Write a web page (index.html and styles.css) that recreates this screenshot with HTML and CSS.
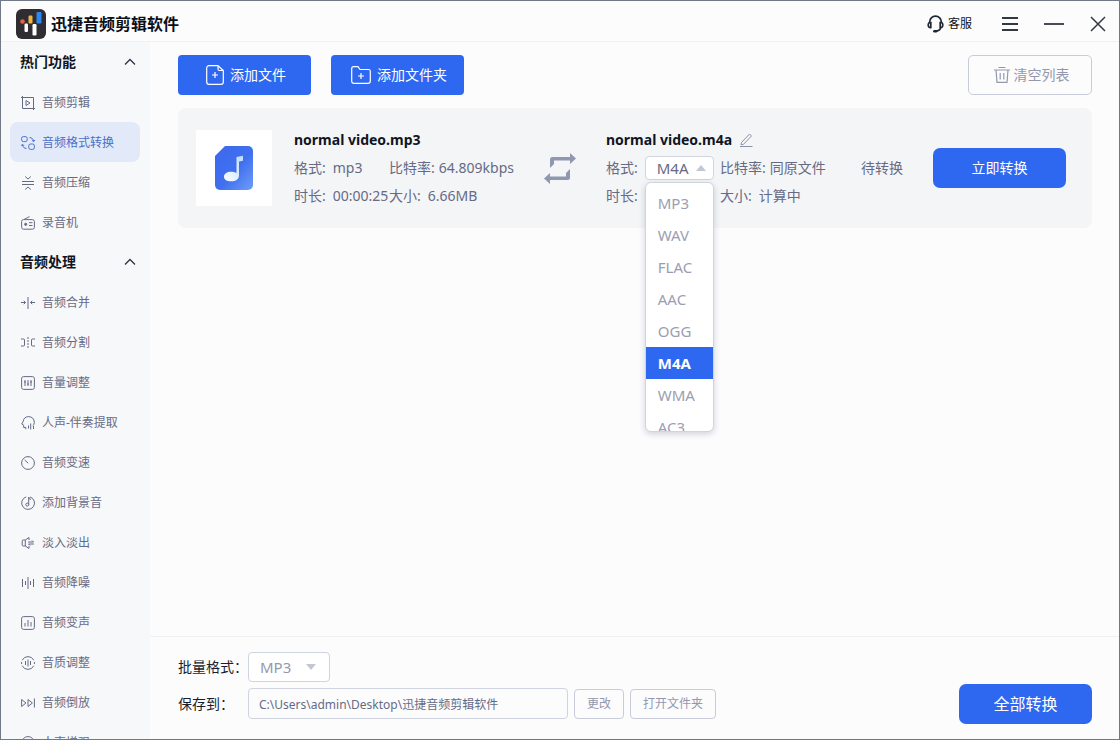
FILE: index.html
```html
<!DOCTYPE html>
<html lang="zh-CN">
<head>
<meta charset="utf-8">
<meta name="viewport" content="width=device-width, initial-scale=1">
<title>迅捷音频剪辑软件</title>
<link rel="stylesheet" href="styles.css">
</head>
<body>
<div class="app">
  <header class="titlebar">
    <svg class="logo" viewBox="0 0 30 30" aria-hidden="true">
      <rect width="30" height="30" rx="6" fill="#2f2d31"/>
      <circle cx="6.500" cy="12.500" r="2.300" fill="#e8613c"/>
      <rect x="8.500" y="14.500" width="3.500" height="8.500" rx="1.200" fill="#fff"/>
      <rect x="12.500" y="6.500" width="4" height="8" rx="1.200" fill="#f0b445"/>
      <rect x="16.500" y="15" width="4" height="11.500" rx="1.200" fill="#fff"/>
      <rect x="20.500" y="3" width="5" height="11.500" rx="1.200" fill="#2f86ee"/>
    </svg>
    <h1 class="app-name">迅捷音频剪辑软件</h1>
    <div class="window-tools">
      <button class="tool support" type="button">
        <svg width="17" height="18" viewBox="0 0 17 18" fill="none" stroke="#1d2433" stroke-width="1.700" stroke-linecap="round" aria-hidden="true">
          <path d="M2.600 7.500V7a5.900 5.900 0 0 1 11.800 0v.5M3.800 7.500c-1.400-.3-2.600.7-2.600 2.500s1.200 2.900 2.600 2.600zM13.200 7.500c1.400-.3 2.600.7 2.600 2.500s-1.200 2.900-2.600 2.600zM13.800 12.800c-.6 2-2.300 3.200-4.600 3.400"/>
          <path d="M7.400 16.300h1.600" stroke-width="2.600"/>
        </svg>
        客服
      </button>
      <button class="tool" type="button" aria-label="菜单">
        <svg width="16" height="16" viewBox="0 0 16 16" stroke="#333844" stroke-width="1.800" aria-hidden="true"><path d="M0 2h16M0 8h16M0 14h16"/></svg>
      </button>
      <button class="tool" type="button" aria-label="最小化">
        <svg width="20" height="16" viewBox="0 0 20 16" stroke="#333844" stroke-width="1.800" aria-hidden="true"><path d="M0 8h20"/></svg>
      </button>
      <button class="tool" type="button" aria-label="关闭">
        <svg width="16" height="16" viewBox="0 0 16 16" stroke="#333844" stroke-width="1.500" aria-hidden="true"><path d="M1 1l14 14M15 1L1 15"/></svg>
      </button>
    </div>
  </header>

  <nav class="sidebar" aria-label="功能">
    <button class="group" type="button" aria-expanded="true">热门功能
      <svg width="12" height="8" viewBox="0 0 12 8" aria-hidden="true"><path d="M1 6.500L6 1.500l5 5"/></svg>
    </button>
    <a class="item" href="#"><svg viewBox="0 0 14 14" aria-hidden="true"><path d="M0 1.500h12.500V14M1.500 0v12.500H14M5 4.500v5L9 7z"/></svg>音频剪辑</a>
    <a class="item active" href="#" aria-current="page"><svg viewBox="0 0 14 14" aria-hidden="true"><rect x=".6" y=".6" width="5.600" height="5" rx="1.800"/><rect x="7.800" y="8" width="5.600" height="5.400" rx="1.800"/><path d="M8.500 1.600c2.300 0 3.800 1.200 4 3.700M10.800 4l1.700 1.700L14 4M.2 9.800l1.300-1.600L3 9.800M1.500 8.600c.2 2.500 1.700 3.800 4 3.800"/></svg>音频格式转换</a>
    <a class="item" href="#"><svg viewBox="0 0 14 14" aria-hidden="true"><path d="M1 5.500h12M1 8.500h12M4.200 .5L7 3l2.800-2.500M4.200 13.500L7 11l2.800 2.500"/></svg>音频压缩</a>
    <a class="item" href="#"><svg viewBox="0 0 14 14" aria-hidden="true"><rect x=".6" y="3.600" width="12.800" height="9.600" rx="2"/><path d="M3 3.500L8.500 .6M8 6.700h3.500M8 9.500h3.500"/><circle cx="4.700" cy="8.300" r="1.100" fill="currentColor"/></svg>录音机</a>
    <button class="group" type="button" aria-expanded="true">音频处理
      <svg width="12" height="8" viewBox="0 0 12 8" aria-hidden="true"><path d="M1 6.500L6 1.500l5 5"/></svg>
    </button>
    <a class="item" href="#"><svg viewBox="0 0 14 14" aria-hidden="true"><path d="M7 1v12M0 6.500h4.500M2.800 4.800l1.700 1.700-1.700 1.700M14 6.500H9.500M11.200 4.800L9.500 6.500l1.700 1.700"/></svg>音频合并</a>
    <a class="item" href="#"><svg viewBox="0 0 14 14" aria-hidden="true"><path d="M0 3h2.500Q3.500 3 3.500 4v5q0 1-1 1H0M14 3h-2.500Q10.500 3 10.500 4v5q0 1 1 1H14"/><path d="M7 1v12" stroke-dasharray="2 1"/></svg>音频分割</a>
    <a class="item" href="#"><svg viewBox="0 0 14 14" aria-hidden="true"><rect x=".6" y=".6" width="12.800" height="12.800" rx="2"/><path d="M4 4v6M7 4v6M10 4v6M3 6h2M6 8h2M9 6h2"/></svg>音量调整</a>
    <a class="item" href="#"><svg viewBox="0 0 14 14" aria-hidden="true"><path d="M4.800 13.200V11.500H2.700V9.200L.7 8l1.400-2.300C2.300 2.500 4.600.6 7.600.6c3.300 0 5.700 2.300 5.700 5.600 0 1.500-.5 2.600-1.300 3.500M7.500 9.500v3M9.700 7.500v6M12.500 10v3"/></svg>人声-伴奏提取</a>
    <a class="item" href="#"><svg viewBox="0 0 14 14" aria-hidden="true"><circle cx="7" cy="7" r="6.400"/><path d="M3.700 4l3.500 3.200"/></svg>音频变速</a>
    <a class="item" href="#"><svg viewBox="0 0 14 14" aria-hidden="true"><path d="M5.200.9A6.400 6.400 0 1 0 9 .9M7.700 8.500V1q.2 2.200 2.300 2.500"/><circle cx="6.300" cy="8.600" r="1.500"/></svg>添加背景音</a>
    <a class="item" href="#"><svg viewBox="0 0 14 14" aria-hidden="true"><path d="M8 4V1.500L4.300 4H2.200Q1.200 4 1.200 5v4q0 1 1 1h2.100L8 12.500V10M4.300 4v6M7 6h5.500L11 4.500M13 8H7.500L9 9.500"/></svg>淡入淡出</a>
    <a class="item" href="#"><svg viewBox="0 0 14 14" aria-hidden="true"><path d="M1.500 3v8M4.500 5v4M7 1v12M9.500 5v4M12.500 3v8"/></svg>音频降噪</a>
    <a class="item" href="#"><svg viewBox="0 0 14 14" aria-hidden="true"><rect x=".6" y=".6" width="12.800" height="12.800" rx="2"/><path d="M4 7v3.500M7 4v6.500M10 6v4.500"/></svg>音频变声</a>
    <a class="item" href="#"><svg viewBox="0 0 14 14" aria-hidden="true"><path d="M1.200 4.300a6.400 6.400 0 0 1 11.600 0M1.200 9.700a6.400 6.400 0 0 0 11.600 0M.6 6v2M13.400 6v2M4.500 5v4M7 3.500v7M9.500 5v4"/></svg>音质调整</a>
    <a class="item" href="#"><svg viewBox="0 0 14 14" aria-hidden="true"><path d="M.6 3.500v7L5 7zM7 3.500v7L11.400 7zM13.400 2.500v9"/></svg>音频倒放</a>
    <a class="item" href="#"><svg viewBox="0 0 14 14" aria-hidden="true"><circle cx="7" cy="7" r="6.400"/></svg>人声增强</a>
  </nav>

  <main class="content">
    <div class="toolbar">
      <button class="btn primary" type="button">
        <svg width="18" height="20" viewBox="0 0 18 20" aria-hidden="true"><path d="M12 .7H3A2.300 2.300 0 0 0 .7 3v14A2.300 2.300 0 0 0 3 19.300h12a2.300 2.300 0 0 0 2.300-2.300V5.500zM12 .7V4q0 1.500 1.500 1.500h3.800M9 7v6M6 10h6"/></svg>
        添加文件
      </button>
      <button class="btn primary" type="button">
        <svg width="20" height="18" viewBox="0 0 20 18" aria-hidden="true"><path d="M.7 15V2.500Q.7.700 2.500.7H7l2 2.800h8.500q1.800 0 1.800 1.800V15q0 2.300-2.300 2.300H3Q.7 17.300.7 15zM10 7v6M7 10h6"/></svg>
        添加文件夹
      </button>
      <button class="btn outline clear" type="button">
        <svg width="16" height="18" viewBox="0 0 16 18" aria-hidden="true"><path d="M4.500 1.500h7M0 4h16M2 4l1 12.300h10L14 4M6.200 7v6.500M9.800 7v6.500"/></svg>
        清空列表
      </button>
    </div>

    <article class="task">
      <div class="thumb">
        <svg width="38" height="44" viewBox="0 0 38 44" aria-hidden="true">
          <defs>
            <linearGradient id="fileFill" x1="0" y1="0" x2="1" y2="1"><stop offset="0" stop-color="#3c68ee"/><stop offset=".55" stop-color="#4070ef"/><stop offset="1" stop-color="#6f9df8"/></linearGradient>
            <linearGradient id="noteFill" x1="1" y1="0" x2="0" y2="1"><stop offset="0" stop-color="#b9ddff"/><stop offset="1" stop-color="#fff"/></linearGradient>
          </defs>
          <path d="M10 0h23a5 5 0 0 1 5 5v34a5 5 0 0 1-5 5H5a5 5 0 0 1-5-5V10z" fill="url(#fileFill)"/>
          <path d="M21.500 11l6.500-1.200v5l-4 .7V29.500c0 3.500-3 5.800-8 5.800-4 0-7-1.600-7-4.600s3-5 7-5c2 0 4 .5 5.500 1.200z" fill="url(#noteFill)"/>
        </svg>
      </div>
      <div class="info">
        <h2 class="file-name">normal video.mp3</h2>
        <dl class="meta source">
          <div class="field"><dt>格式:</dt><dd>mp3</dd></div>
          <div class="field tight"><dt>比特率:</dt><dd>64.809kbps</dd></div>
          <div class="field"><dt>时长:</dt><dd>00:00:25</dd></div>
          <div class="field"><dt>大小:</dt><dd>6.66MB</dd></div>
        </dl>
      </div>
      <svg class="swap" width="32" height="31" viewBox="0 0 32 31" aria-hidden="true"><path d="M26 0l6 5.500L26 11V7.500H10V11l-4 4V6.500Q6 4 8.500 4H26zM6 31L0 25.500 6 20v3.500h16V20l4-4v8.500q0 2.500-2.500 2.500H6z" fill="#8f98b0"/></svg>
      <div class="info">
        <h2 class="file-name">normal video.m4a
          <button class="rename" type="button" aria-label="重命名"><svg width="13" height="14" viewBox="0 0 13 14" aria-hidden="true"><path d="M1.500 9.500L9.500 1l2 2-8 8.300-2.500.5zM0 13.500h12.500"/></svg></button>
        </h2>
        <dl class="meta target">
          <div class="field"><dt><label for="format">格式:</label></dt>
            <dd class="picker">
              <span class="select open"><select id="format"><option>M4A</option></select></span>
              <ul class="menu" role="listbox" aria-label="格式">
                <li role="option">MP3</li>
                <li role="option">WAV</li>
                <li role="option">FLAC</li>
                <li role="option">AAC</li>
                <li role="option">OGG</li>
                <li role="option" class="chosen" aria-selected="true">M4A</li>
                <li role="option">WMA</li>
                <li role="option">AC3</li>
              </ul>
            </dd></div>
          <div class="field tight"><dt>比特率:</dt><dd>同原文件</dd></div>
          <div class="field"><dt>时长:</dt></div>
          <div class="field"><dt>大小:</dt><dd>计算中</dd></div>
        </dl>
      </div>
      <span class="status">待转换</span>
      <button class="btn primary round" type="button">立即转换</button>
    </article>
  </main>

  <footer class="output">
    <div class="settings">
      <div class="row">
        <label class="caption" for="batch">批量格式：</label>
        <span class="select large"><select id="batch"><option>MP3</option></select></span>
      </div>
      <div class="row">
        <label class="caption" for="path">保存到：</label>
        <input class="path" id="path" type="text" value="C:\Users\admin\Desktop\迅捷音频剪辑软件">
        <button class="btn outline small" type="button">更改</button>
        <button class="btn outline small" type="button">打开文件夹</button>
      </div>
    </div>
    <button class="btn primary round all" type="button">全部转换</button>
  </footer>
</div>
</body>
</html>
```

FILE: styles.css
```css
* { box-sizing: border-box; }

body {
  margin: 0;
  font: 14px/20px "Noto Sans", "Noto Sans CJK SC", sans-serif;
  color: #666b85;
}

button, input, select { font: inherit; color: inherit; }
button { cursor: pointer; }
svg { flex: none; display: block; fill: none; }
h1, h2, dl, dd, ul { margin: 0; padding: 0; }

.app {
  display: grid;
  grid-template: 41px minmax(0, 1fr) auto / 149px minmax(0, 1fr);
  height: 100vh;
  border: 1px solid #727986;
  background: #fcfcfd;
  overflow: hidden;
}

/* Title bar */
.titlebar {
  grid-column: 1 / -1;
  display: flex;
  align-items: center;
  padding: 6px 13px 0 15px;
  border-bottom: 1px solid #f0f1f4;
}
.logo { width: 30px; height: 30px; fill: initial; }
.app-name {
  margin-left: 5px;
  font-size: 16px;
  font-weight: 700;
  color: #0c0f16;
}
.window-tools {
  display: flex;
  align-items: center;
  gap: 30px;
  margin-left: auto;
}
.tool {
  display: flex;
  align-items: center;
  gap: 4px;
  padding: 0;
  border: 0;
  background: none;
  font-size: 12px;
  color: #0f1420;
}
.tool:nth-child(3) { margin: 0 -4px; }

/* Sidebar */
.sidebar {
  grid-row: 2 / 4;
  padding: 0 10px 0 9px;
  background: #f7f8fa;
  overflow: hidden;
}
.group, .item {
  display: flex;
  align-items: center;
  width: 100%;
  height: 40px;
  padding-top: 1px;
}
.group {
  justify-content: space-between;
  padding-right: 4px;
  padding-left: 10px;
  border: 0;
  background: none;
  font-weight: 700;
  color: #111621;
}
.group svg { stroke: #2f3542; stroke-width: 1.3; }
.item {
  gap: 7px;
  padding-right: 11px;
  padding-left: 11px;
  border-radius: 8px;
  font-size: 12px;
  color: #666b85;
  text-decoration: none;
}
.item svg {
  width: 14px;
  height: 14px;
  stroke: currentColor;
  stroke-width: 1;
  overflow: visible;
}
.item.active { background: #e2eaf9; color: #4a70c8; }

/* Buttons */
.btn {
  display: flex;
  align-items: center;
  justify-content: center;
  gap: 6px;
  min-width: 133px;
  height: 40px;
  padding: 0 12px;
  border: 0;
  border-radius: 4px;
}
.btn svg { stroke: currentColor; stroke-width: 1.2; }
.toolbar .btn { padding-left: 15px; }
.primary { background: #2f68f0; color: #fff; }
.round { border-radius: 7px; }
.outline {
  min-width: 0;
  border: 1px solid #c8ccda;
  border-radius: 5px;
  background: #fcfcfd;
  color: #9498ae;
}
.small { height: 30px; font-size: 12px; border-radius: 4px; }
.all { font-size: 16px; }

/* Task list */
.content { padding: 13px 27px 0 28px; }
.toolbar { display: flex; gap: 20px; }
.clear { gap: 4px; min-width: 124px; margin-left: auto; }

.task {
  display: grid;
  grid-template-columns: 76px minmax(0, 250px) 32px minmax(0, 1fr) auto auto;
  align-items: center;
  min-height: 120px;
  margin-top: 13px;
  padding: 18px 26px 18px 18px;
  border-radius: 8px;
  background: #f4f5f7;
}
.thumb {
  display: grid;
  place-items: center;
  height: 76px;
  background: #fff;
}
.info { margin-left: 22px; white-space: nowrap; }
.thumb + .info { margin-right: -22px; }
.swap { margin-left: 22px; }
.swap + .info { margin-left: 52px; }
.file-name {
  display: flex;
  align-items: center;
  gap: 8px;
  font-size: 14px;
  line-height: 28px;
  color: #10151f;
}
.rename { padding: 0; border: 0; background: none; }
.rename svg { stroke: #8d92aa; stroke-width: 1; }
.meta {
  display: grid;
  grid-template-columns: 95px auto;
  justify-content: start;
  line-height: 28px;
}
.meta.target { grid-template-columns: 114px auto; }
.field { display: flex; gap: 7px; }
.field.tight { gap: 4px; }
.status { margin-right: 30px; }

/* Drop-downs */
.select { position: relative; display: inline-flex; }
.select select {
  appearance: none;
  width: 69px;
  height: 24px;
  padding: 0 11px;
  border: 1px solid #d0d4e0;
  border-radius: 4px;
  background: #fff;
  font-size: 15px;
  line-height: 20px;
}
.select::after {
  content: "";
  position: absolute;
  top: 50%;
  right: 8px;
  border: 5px solid transparent;
  border-top: 6px solid #c3c7d3;
  border-bottom: 0;
  transform: translateY(-50%);
  pointer-events: none;
}
.select.open::after { border-top: 0; border-bottom: 6px solid #c3c7d3; }
.select.large select { width: 82px; height: 30px; color: #9498ae; }
.select.large::after { right: 14px; }

.picker { position: relative; display: flex; align-items: center; }
.menu {
  position: absolute;
  top: 100%;
  left: 0;
  z-index: 1;
  width: 69px;
  height: 250px;
  padding-top: 4px;
  border: 1px solid #d0d4e0;
  border-radius: 6px;
  background: #fff;
  box-shadow: 0 2px 6px #1e284633;
  overflow: hidden;
  list-style: none;
  font-size: 15px;
  line-height: 32px;
  color: #9a9eb2;
}
.menu li { padding-left: 12px; }
.menu .chosen { background: #2f68f0; color: #fff; font-weight: 700; }

/* Output settings */
.output {
  display: flex;
  justify-content: space-between;
  align-items: flex-end;
  padding: 15px 27px 15px 28px;
  border-top: 1px solid #f0f1f4;
}
.settings { display: grid; gap: 6px; margin-bottom: 5px; }
.row { display: flex; align-items: center; gap: 6px; }
.caption { width: 64px; white-space: nowrap; color: #1a1f2b; }
.path {
  width: 320px;
  height: 31px;
  padding: 0 10px;
  border: 1px solid #d0d4e0;
  border-radius: 4px;
  background: #fcfcfd;
  font-size: 12px;
}
```
